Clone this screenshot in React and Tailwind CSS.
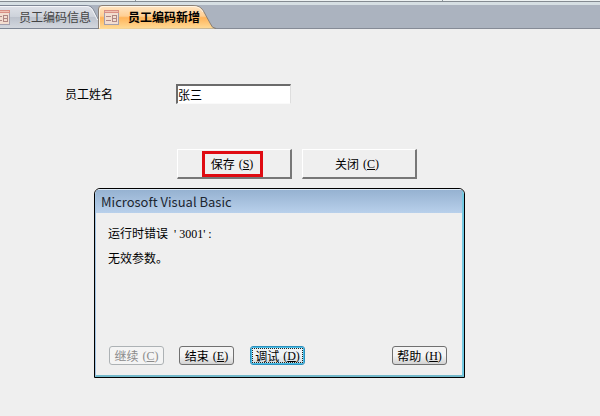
import React from "react";

const CJK = "font-['Noto_Sans_CJK_SC',sans-serif]";
const LATIN = "font-['Liberation_Serif',serif]";

function FormIcon() {
  return (
    <svg width="16" height="15" viewBox="0 0 16 15" className="shrink-0" aria-hidden="true">
      <rect x="0.5" y="0.5" width="14" height="14" fill="#f3ddd0" stroke="#a39fae" />
      <rect x="0" y="0" width="15" height="3" fill="#d98f84" />
      <rect x="1" y="1" width="13" height="1" fill="#efc0b2" />
      <path d="M2 6.5h5M2 10.5h5" stroke="#b08784" />
      <rect x="8.5" y="5.5" width="4" height="6" fill="none" stroke="#b08784" />
      <path d="M8 8.500h5" stroke="#b08784" />
    </svg>
  );
}

function Caption({ text, accel }) {
  return (
    <span className="flex items-center gap-1 whitespace-nowrap">
      <span>{text}</span>
      <span className={LATIN}>
        (<span className="underline">{accel}</span>)
      </span>
    </span>
  );
}

function FormButton({ text, accel, marked }) {
  return (
    <button
      type="button"
      className="flex h-[30px] w-[115px] items-center justify-center border-t border-r-2 border-b-2 border-l border-t-white border-r-[#777] border-b-[#777] border-l-white bg-[#efefef] pr-1 text-xs leading-4"
    >
      <span
        className={
          marked
            ? "flex h-[26px] w-[61px] items-center justify-center border-3 border-[#df0b12]"
            : "flex h-[26px] w-[61px] items-center justify-center"
        }
      >
        <Caption text={text} accel={accel} />
      </span>
    </button>
  );
}

const dialogStyles = {
  normal: "border-[#707070] bg-linear-to-b from-[#f4f4f4] from-50% to-[#d3d3d3] to-100%",
  disabled: "border-[#adb2b5] bg-[#f4f4f4] text-[#8b8b8b]",
  focused: "border-[#2c8fbd] bg-linear-to-b from-[#eef3f5] from-50% to-[#d0d8dc] to-100% ring-1 ring-inset ring-[#48bfe8]",
};

function DialogButton({ text, accel, kind = "normal" }) {
  return (
    <button
      type="button"
      disabled={kind === "disabled"}
      className={`flex h-[19px] w-[55px] items-center justify-center rounded-[3px] border text-xs leading-4 ${dialogStyles[kind]}`}
    >
      {kind === "focused" ? (
        <span className="flex h-[15px] w-[51px] items-center justify-center border border-dotted border-[#222]">
          <Caption text={text} accel={accel} />
        </span>
      ) : (
        <Caption text={text} accel={accel} />
      )}
    </button>
  );
}

export default function App() {
  return (
    <div className={`min-h-screen bg-[#efefef] text-xs leading-4 text-black ${CJK}`}>
      <div className="flex h-[5px] flex-col bg-[#d6dfe3]">
        <div className="flex h-px gap-[306px] bg-[#edf2f2] pl-[135px]">
          <div className="w-px bg-[#8c969c]" />
          <div className="w-px bg-[#8c969c]" />
        </div>
        <div className="h-px bg-[#848b91]" />
      </div>
      <nav className="flex h-6 border-b border-[#858b96] bg-[#abb3bf]">
        <button type="button" className="relative flex h-6 w-[98px] shrink-0 items-center">
          <svg className="absolute inset-0" width="98" height="24" aria-hidden="true">
            <defs>
              <linearGradient id="idle" x1="0" y1="0" x2="0" y2="1">
                <stop offset="0" stopColor="#dfe2e8" />
                <stop offset="0.5" stopColor="#cdd2da" />
                <stop offset="0.52" stopColor="#bdc3cd" />
                <stop offset="1" stopColor="#d4d8df" />
              </linearGradient>
            </defs>
            <path d="M0 .5H86Q92 .5 94 6L98 14V23.5H0Z" fill="url(#idle)" />
            <path d="M0 .5H86Q92 .5 94 6L98 14M0 23.5H98" fill="none" stroke="#7f8795" />
            <path d="M0 1.5H86Q91 1.5 93 6L97.500 15" fill="none" stroke="#f3f5f8" />
          </svg>
          <span className="relative -ml-[5px] flex items-center gap-2 text-[#444]">
            <FormIcon />
            <span className="whitespace-nowrap">员工编码信息</span>
          </span>
        </button>
        <button type="button" className="relative flex h-6 w-[118px] shrink-0 items-center">
          <svg className="absolute inset-0" width="118" height="24" aria-hidden="true">
            <defs>
              <linearGradient id="active" x1="0" y1="0" x2="0" y2="1">
                <stop offset="0" stopColor="#ffe6c4" />
                <stop offset="0.45" stopColor="#ffcf94" />
                <stop offset="0.52" stopColor="#ffb45a" />
                <stop offset="1" stopColor="#ffdc98" />
              </linearGradient>
            </defs>
            <path
              d="M.5 24V4Q.5 .5 4 .5H95Q103 .5 106 7L112 18Q114 23.500 118 23.500"
              fill="url(#active)"
              stroke="#8a8076"
            />
            <path d="M1.500 23V5Q1.500 1.500 5 1.500H95Q102 1.500 105 7" fill="none" stroke="#fff5e4" />
          </svg>
          <span className="relative ml-[6px] flex items-center gap-2 font-bold">
            <FormIcon />
            <span className="whitespace-nowrap">员工编码新增</span>
          </span>
        </button>
      </nav>

      <main>
        <form className="pt-[55px]" onSubmit={(e) => e.preventDefault()}>
          <div className="flex items-center pl-[65px]">
            <label htmlFor="employee" className="w-[111px]">
              员工姓名
            </label>
            <input
              id="employee"
              type="text"
              defaultValue="张三"
              className="h-5 w-[115px] border-t-2 border-r border-b border-l-2 border-t-[#6b6b6b] border-r-[#dedede] border-b-[#fafafa] border-l-[#6b6b6b] bg-white outline-none"
            />
          </div>
          <div className="mt-[45px] flex gap-[10px] pl-[177px]">
            <FormButton text="保存" accel="S" marked />
            <FormButton text="关闭" accel="C" />
          </div>
        </form>

        <section
          role="dialog"
          aria-labelledby="dialog-title"
          className="mt-[9px] ml-[94px] w-[371px] overflow-hidden rounded-t-md border border-black bg-[#efefef]"
        >
          <div className="rounded-t-[5px] border-t border-r-2 border-b-2 border-l border-t-[#dce9f5] border-r-[#73c9e2] border-b-[#73b9cb] border-l-[#a5c6e5]">
            <h1
              id="dialog-title"
              className="flex h-[23px] items-center bg-linear-to-b from-[#96b2d1] to-[#b8d0eb] pl-[5px] font-['Noto_Sans_CJK_SC','Noto_Sans',sans-serif] text-[13px] text-[#1c2630]"
            >
              Microsoft Visual Basic
            </h1>
            <div className="px-3 pt-3 leading-4">
              <p>
                运行时错误
                <span className={`ml-[6px] ${LATIN}`}>&#39; 3001&#39; :</span>
              </p>
              <p className="mt-2">无效参数。</p>
            </div>
            <div className="mt-20 flex pr-[15px] pb-[10px] pl-[13px]">
              <DialogButton text="继续" accel="C" kind="disabled" />
              <div className="ml-[15px] flex gap-4">
                <DialogButton text="结束" accel="E" />
                <DialogButton text="调试" accel="D" kind="focused" />
              </div>
              <div className="ml-auto">
                <DialogButton text="帮助" accel="H" />
              </div>
            </div>
          </div>
        </section>
      </main>
    </div>
  );
}
